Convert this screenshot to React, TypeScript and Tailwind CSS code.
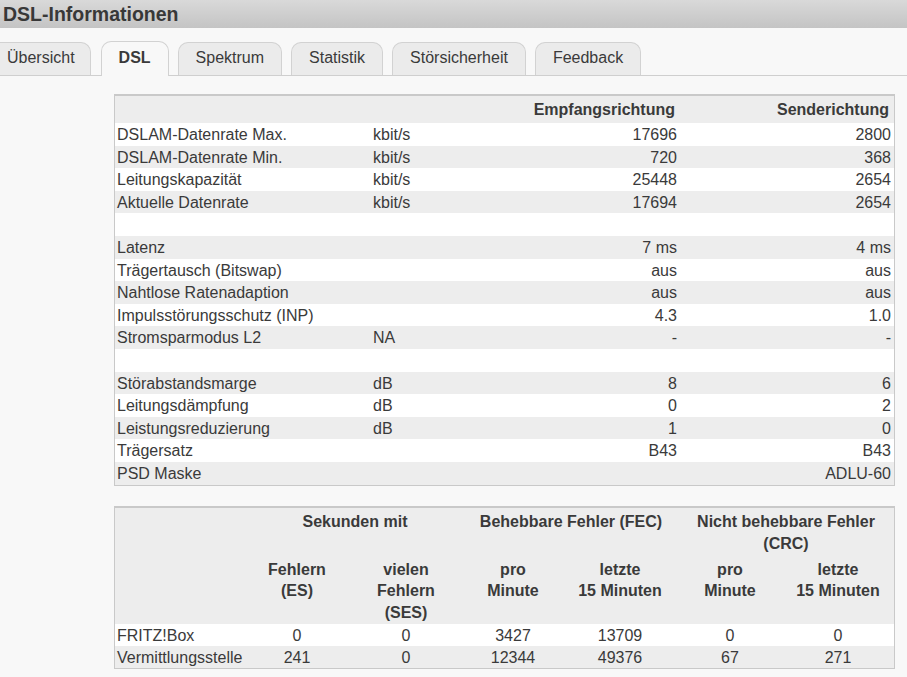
import cx from 'clsx'

const tabs = ['Übersicht', 'DSL', 'Spektrum', 'Statistik', 'Störsicherheit', 'Feedback']

type LineRow = [string, string, string, string] | null

const lineRows: LineRow[] = [
  ['DSLAM-Datenrate Max.', 'kbit/s', '17696', '2800'],
  ['DSLAM-Datenrate Min.', 'kbit/s', '720', '368'],
  ['Leitungskapazität', 'kbit/s', '25448', '2654'],
  ['Aktuelle Datenrate', 'kbit/s', '17694', '2654'],
  null,
  ['Latenz', '', '7 ms', '4 ms'],
  ['Trägertausch (Bitswap)', '', 'aus', 'aus'],
  ['Nahtlose Ratenadaption', '', 'aus', 'aus'],
  ['Impulsstörungsschutz (INP)', '', '4.3', '1.0'],
  ['Stromsparmodus L2', 'NA', '-', '-'],
  null,
  ['Störabstandsmarge', 'dB', '8', '6'],
  ['Leitungsdämpfung', 'dB', '0', '2'],
  ['Leistungsreduzierung', 'dB', '1', '0'],
  ['Trägersatz', '', 'B43', 'B43'],
  ['PSD Maske', '', '', 'ADLU-60'],
]

const errorRows: [string, ...string[]][] = [
  ['FRITZ!Box', '0', '0', '3427', '13709', '0', '0'],
  ['Vermittlungsstelle', '241', '0', '12344', '49376', '67', '271'],
]

function TabBar() {
  return (
    <div className="ml-[-14px] mt-[13px] flex h-[35px] items-end gap-[9px] border-b border-[#cfcfcf]">
      {tabs.map((tab, i) => {
        const active = tab === 'DSL'
        return (
          <div
            key={tab}
            className={cx(
              'flex items-center rounded-t-[10px] border-x border-t border-[#d2d2d2] pb-[3px] text-[16px]',
              i === 0 ? 'mr-[1px] pl-[20px] pr-[15px]' : 'px-[17px]',
              active ? 'mb-[-1px] h-[35px] bg-[#f8f8f8] font-bold' : 'h-[33px] bg-[#ebebeb]',
            )}
          >
            {tab}
          </div>
        )
      })}
    </div>
  )
}

function LineTable() {
  return (
    <div className="w-[781px] border border-t-2 border-[#c9c9c9]">
      <div className="grid h-[27px] grid-cols-[256px_100px_209px_214px] items-center bg-[#ededed] font-bold">
        <span />
        <span />
        <span className="pr-[5px] text-right">Empfangsrichtung</span>
        <span className="pr-[5px] text-right">Senderichtung</span>
      </div>
      {lineRows.map((row, i) => (
        <div
          key={i}
          className={cx(
            'grid h-[22.6px] grid-cols-[256px_100px_209px_214px] items-center',
            i % 2 === 0 ? 'bg-white' : 'bg-[#ededed]',
          )}
        >
          {row && (
            <>
              <span className="pl-[2px]">{row[0]}</span>
              <span className="pl-[2px]">{row[1]}</span>
              <span className="pr-[3px] text-right">{row[2]}</span>
              <span className="pr-[3px] text-right">{row[3]}</span>
            </>
          )}
        </div>
      ))}
    </div>
  )
}

function ErrorTable() {
  const cols = 'grid grid-cols-[131px_102px_116px_98px_116px_104px_112px]'
  return (
    <div className="mt-[20px] w-[781px] border border-t-2 border-[#c9c9c9]">
      {/* Column groups */}
      <div className={cx(cols, 'h-[48px] bg-[#ededed] pt-[3px] text-center font-bold leading-[22px]')}>
        <span />
        <span className="col-span-2">Sekunden mit</span>
        <span className="col-span-2">Behebbare Fehler (FEC)</span>
        <span className="col-span-2 px-[10px]">Nicht behebbare Fehler (CRC)</span>
      </div>
      <div className={cx(cols, 'h-[68px] bg-[#ededed] pt-[3px] text-center font-bold leading-[21.5px]')}>
        <span />
        <span>Fehlern<br />(ES)</span>
        <span>vielen<br />Fehlern<br />(SES)</span>
        <span>pro<br />Minute</span>
        <span>letzte<br />15 Minuten</span>
        <span>pro<br />Minute</span>
        <span>letzte<br />15 Minuten</span>
      </div>
      {errorRows.map(([label, ...values], i) => (
        <div
          key={label}
          className={cx(cols, 'h-[22px] items-center', i % 2 === 0 ? 'bg-white' : 'bg-[#ededed]')}
        >
          <span className="pl-[2px]">{label}</span>
          {values.map((v, j) => (
            <span key={j} className="text-center">{v}</span>
          ))}
        </div>
      ))}
    </div>
  )
}

export default function App() {
  return (
    <div className="min-h-[677px] w-full overflow-hidden bg-[#f8f8f8] font-['Liberation_Sans',Arial,sans-serif] text-[16px] text-[#3a3a3a]">
      <div className="h-[28px] bg-gradient-to-b from-[#d9d9d9] to-[#c4c4c4] pl-[3px] text-[19.5px] font-bold leading-[28px] text-[#383838]">
        DSL-Informationen
      </div>
      <TabBar />
      <div className="ml-[114px] mt-[18px]">
        <LineTable />
        <ErrorTable />
      </div>
    </div>
  )
}
